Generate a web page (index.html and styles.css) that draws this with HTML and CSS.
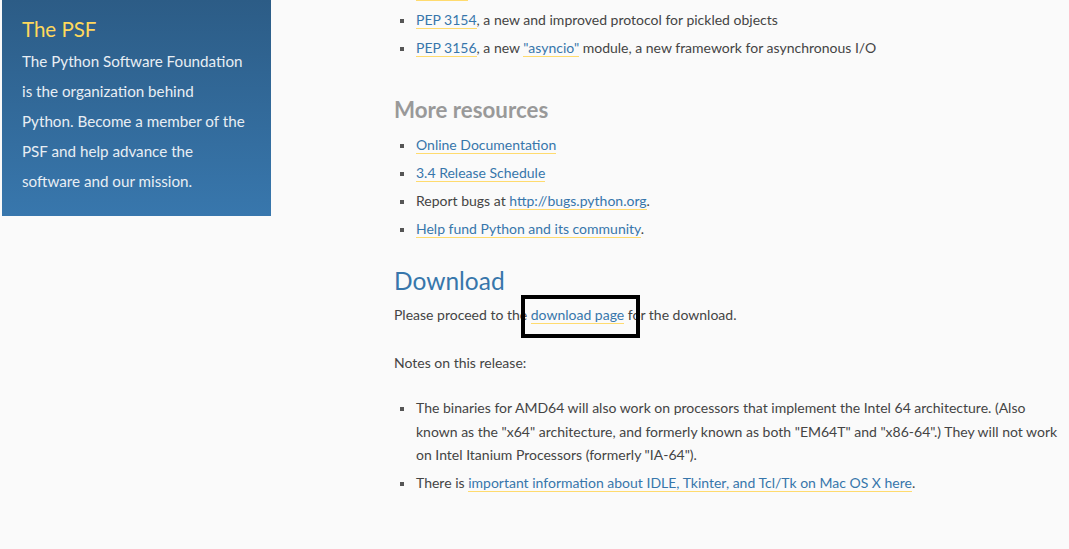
FILE: index.html
```html
<!DOCTYPE html>
<html lang="en">
<head>
    <meta charset="UTF-8">
    <title>Python 3.4.0 Release</title>
    <link rel="stylesheet" href="styles.css">
</head>
<body>
    <div class="page">
        <aside class="side">
            <div class="psf-box">
                <h3>The PSF</h3>
                <p>The Python Software Foundation is the organization behind Python. Become a member of the PSF and help advance the software and our mission.</p>
            </div>
        </aside>
        <main class="content">
            <ul class="items">
                <li><a href="#">PEP 456</a>, a new hash algorithm for Python strings and binary data</li>
                <li><a href="#">PEP 3154</a>, a new and improved protocol for pickled objects</li>
                <li><a href="#">PEP 3156</a>, a new <a href="#">"asyncio"</a> module, a new framework for asynchronous I/O</li>
            </ul>

            <h2 class="gray-title">More resources</h2>
            <ul class="items">
                <li><a href="#">Online Documentation</a></li>
                <li><a href="#">3.4 Release Schedule</a></li>
                <li>Report bugs at <a href="#">http://bugs.python.org</a>.</li>
                <li><a href="#">Help fund Python and its community</a>.</li>
            </ul>

            <h2 class="blue-title">Download</h2>
            <p>Please proceed to the <span class="marked"><a href="#">download page</a></span> for the download.</p>
            <p class="notes">Notes on this release:</p>
            <ul class="items notes-list">
                <li>The binaries for AMD64 will also work on processors that implement the Intel 64 architecture. (Also known as the "x64" architecture, and formerly known as both "EM64T" and "x86-64".) They will not work on Intel Itanium Processors (formerly "IA-64").</li>
                <li>There is <a href="#">important information about IDLE, Tkinter, and Tcl/Tk on Mac OS X here</a>.</li>
            </ul>
        </main>
    </div>
</body>
</html>
```

FILE: styles.css
```css
body, html {
    margin: 0;
    padding: 0;
    background-color: #fafafa;
    font-family: Lato, "Liberation Sans", sans-serif;
    color: #444;
}
.page {
    display: flex;
    align-items: flex-start;
}
.side {
    width: 269px;
    margin-left: 2px;
    flex-shrink: 0;
}
.psf-box {
    background: linear-gradient(#2c5c86, #3877ad);
    padding: 14px 20px 20px 20px;
    height: 182px;
}
.psf-box h3 {
    margin: 0 0 2px 0;
    font-weight: normal;
    font-size: 20.5px;
    color: #ffd85c;
    line-height: 30px;
}
.psf-box p {
    margin: 0;
    max-width: 225px;
    color: #e8eef4;
    font-size: 15.2px;
    line-height: 30px;
}
.content {
    margin-left: 123px;
    margin-top: -20px;
    font-size: 14px;
    width: 672px;
}
.items {
    list-style: none;
    margin: 0;
    padding: 0;
}
.items li {
    position: relative;
    padding-left: 22px;
    line-height: 24px;
    margin-bottom: 4px;
}
.items li::before {
    content: "";
    position: absolute;
    left: 6px;
    top: 11px;
    width: 4px;
    height: 4px;
    background: #555;
}
a {
    color: #3776ab;
    text-decoration: none;
    border-bottom: 1px solid #ffdb6e;
}
.gray-title {
    color: #999;
    font-size: 22.3px;
    font-weight: bold;
    margin: 36px 0 10px 0;
}
.blue-title {
    color: #3776ab;
    font-size: 24.5px;
    font-weight: normal;
    margin: 25px 0 8px 0;
}
.content p {
    margin: 0;
    line-height: 24px;
}
.notes {
    margin-top: 24px !important;
    margin-bottom: 21px !important;
}
.notes-list li {
    line-height: 23.5px;
}
.marked {
    position: relative;
}
.marked::after {
    content: "";
    position: absolute;
    left: -10px;
    right: -16px;
    top: -11px;
    bottom: -15px;
    border: 4px solid #000;
}
```
